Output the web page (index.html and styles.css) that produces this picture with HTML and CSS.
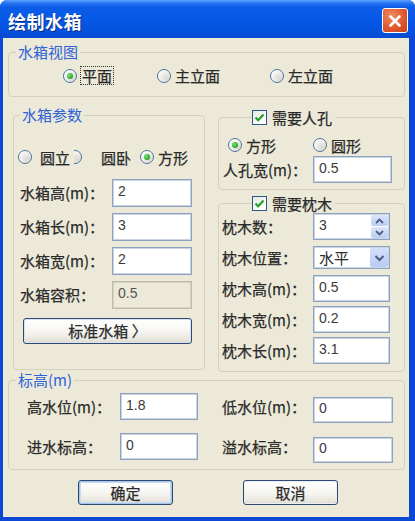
FILE: index.html
```html
<!DOCTYPE html>
<html lang="zh-CN">
<head>
<meta charset="utf-8">
<title>绘制水箱</title>
<link rel="stylesheet" href="styles.css">
</head>
<body>
<div class="window">
  <div class="titlebar">
    <span class="title">绘制水箱</span>
    <span class="close"><svg width="16" height="16" viewBox="0 0 16 16"><path d="M3.5 3.5 L12.5 12.5 M12.5 3.5 L3.5 12.5" stroke="#fff" stroke-width="2.6" stroke-linecap="round"/></svg></span>
  </div>
  <div class="client">
    <fieldset class="group g-view">
      <legend class="blue-legend">水箱视图</legend>
      <div class="view-row">
        <span class="opt"><span class="radio checked"></span><span class="focus">平面</span></span>
        <span class="opt"><span class="radio"></span><span>主立面</span></span>
        <span class="opt"><span class="radio"></span><span>左立面</span></span>
      </div>
    </fieldset>

    <div class="mid">
      <fieldset class="group g-params">
        <legend class="blue-legend">水箱参数</legend>
        <div class="shape-row">
          <span class="opt o1"><span class="radio"></span><span class="t1">圆立</span></span>
          <span class="opt o2"><span class="half"><span class="radio"></span></span><span class="t2">圆卧</span></span>
          <span class="opt o3"><span class="radio checked"></span><span>方形</span></span>
        </div>
        <div class="rows params-rows">
          <div class="field"><span class="lbl w92">水箱高(m)：</span><span class="input w80">2</span></div>
          <div class="field"><span class="lbl w92">水箱长(m)：</span><span class="input w80">3</span></div>
          <div class="field"><span class="lbl w92">水箱宽(m)：</span><span class="input w80">2</span></div>
          <div class="field"><span class="lbl w92">水箱容积：</span><span class="input w80 disabled">0.5</span></div>
        </div>
        <button class="btn btn-std">标准水箱 〉</button>
      </fieldset>

      <div class="rcol">
        <fieldset class="group g-hole">
          <legend class="chk-legend"><span class="checkbox"><svg width="13" height="13" viewBox="0 0 13 13"><path d="M2.5 6.5 L5.2 9.2 L10.5 3.5" fill="none" stroke="#21A121" stroke-width="2.2"/></svg></span>需要人孔</legend>
          <div class="hole-radios">
            <span class="opt h1"><span class="radio checked"></span><span>方形</span></span>
            <span class="opt"><span class="radio"></span><span>圆形</span></span>
          </div>
          <div class="field hole-field"><span class="lbl w90">人孔宽(m)：</span><span class="input w79">0.5</span></div>
        </fieldset>

        <fieldset class="group g-sleeper">
          <legend class="chk-legend"><span class="checkbox"><svg width="13" height="13" viewBox="0 0 13 13"><path d="M2.5 6.5 L5.2 9.2 L10.5 3.5" fill="none" stroke="#21A121" stroke-width="2.2"/></svg></span>需要枕木</legend>
          <div class="rows sleeper-rows">
            <div class="field"><span class="lbl w91">枕木数：</span>
              <span class="input w77 spin"><span class="val">3</span>
                <span class="spinbtns">
                  <span class="sb"><svg width="9" height="6" viewBox="0 0 9 6"><path d="M1 5 L4.5 1.5 L8 5" fill="none" stroke="#4A5E86" stroke-width="1.8"/></svg></span>
                  <span class="sb"><svg width="9" height="6" viewBox="0 0 9 6"><path d="M1 1 L4.5 4.5 L8 1" fill="none" stroke="#4A5E86" stroke-width="1.8"/></svg></span>
                </span>
              </span>
            </div>
            <div class="field"><span class="lbl w91">枕木位置：</span>
              <span class="select w77"><span class="val sel-val">水平</span>
                <span class="arrow"><svg width="11" height="8" viewBox="0 0 11 8"><path d="M1.5 2 L5.5 6 L9.5 2" fill="none" stroke="#4A5E86" stroke-width="2"/></svg></span>
              </span>
            </div>
            <div class="field"><span class="lbl w91">枕木高(m)：</span><span class="input w77">0.5</span></div>
            <div class="field"><span class="lbl w91">枕木宽(m)：</span><span class="input w77">0.2</span></div>
            <div class="field"><span class="lbl w91">枕木长(m)：</span><span class="input w77">3.1</span></div>
          </div>
        </fieldset>
      </div>
    </div>

    <fieldset class="group g-elev">
      <legend class="blue-legend">标高(m)</legend>
      <div class="elev-grid">
        <div class="field half-l"><span class="lbl w93">高水位(m)：</span><span class="input w78">1.8</span></div>
        <div class="field half-r"><span class="lbl w91">低水位(m)：</span><span class="input w80 shift">0</span></div>
        <div class="field half-l"><span class="lbl w93">进水标高：</span><span class="input w78">0</span></div>
        <div class="field half-r"><span class="lbl w91">溢水标高：</span><span class="input w80 shift">0</span></div>
      </div>
    </fieldset>

    <div class="buttons">
      <button class="btn btn-main default">确定</button>
      <button class="btn btn-main">取消</button>
    </div>
  </div>
</div>
</body>
</html>
```

FILE: styles.css
```css
* { box-sizing: border-box; }

body {
  margin: 0;
  font-family: "Noto Sans CJK SC", "Noto Sans", sans-serif;
  font-size: 15px;
  color: #2A2A2A;
  background: #ffffff;
}

.window {
  width: 415px;
  height: 521px;
  display: flex;
  flex-direction: column;
  background: #0C47D6;
  border-radius: 7px 7px 0 0;
  overflow: hidden;
}

.titlebar {
  height: 38px;
  flex: none;
  display: flex;
  align-items: center;
  justify-content: space-between;
  padding: 0 7px 0 8px;
  background: linear-gradient(to bottom, #5DA4FF 0px, #2A76F2 3px, #0C5CE8 7px, #0659E6 18px, #0453DF 30px, #0A4BD2 38px);
}

.title {
  color: #ffffff;
  font-weight: 700;
  font-size: 18px;
  line-height: 20px;
  letter-spacing: 0.5px;
  text-shadow: 1px 1px 0 #0B2C86;
  margin-top: 3px;
}

.close {
  width: 26px;
  height: 25px;
  margin-top: 3px;
  border: 1px solid #ffffff;
  border-radius: 3px;
  background: radial-gradient(circle at 35% 30%, #F08A63 0%, #E0592F 55%, #C43E18 100%);
  display: flex;
  align-items: center;
  justify-content: center;
}

.client {
  flex: 1;
  margin: 0 6px 4px 3px;
  background: #ECE9D8;
  padding: 7px 4px 0 5px;
  display: flex;
  flex-direction: column;
}

/* group boxes */
.group {
  margin: 0;
  min-width: 0;
  padding: 0;
  border: 1px solid #D3D0BF;
  border-radius: 4px;
}

.blue-legend {
  padding: 0 2px;
  font-size: 15px;
  line-height: 14px;
  height: 14px;
  color: #2E63D8;
}

.chk-legend {
  display: flex;
  align-items: center;
  gap: 5px;
  height: 15px;
  line-height: 15px;
  padding: 0 3px 0 0;
  margin-left: 33px;
  color: #2A2A2A;
  -webkit-text-stroke: 0.25px #2A2A2A;
}

.checkbox {
  width: 15px;
  height: 15px;
  border: 1px solid #2A5A8A;
  background: linear-gradient(135deg, #E6E6E0 0%, #FFFFFF 80%);
  display: flex;
  align-items: center;
  justify-content: center;
}

/* radio */
.opt {
  display: flex;
  align-items: center;
  gap: 4px;
  white-space: nowrap;
  -webkit-text-stroke: 0.25px #2A2A2A;
}

.radio {
  width: 14px;
  height: 14px;
  flex: none;
  border-radius: 50%;
  border: 1px solid #4A7298;
  background: radial-gradient(circle at 70% 70%, #D8D8D0 0%, #EDEDE8 45%, #FFFFFF 80%);
  display: flex;
  align-items: center;
  justify-content: center;
}

.radio.checked::after {
  content: "";
  width: 6px;
  height: 6px;
  border-radius: 50%;
  background: radial-gradient(circle at 35% 35%, #7EE07E 0%, #2EAF2E 60%, #178A17 100%);
}

.focus {
  outline: 1px dotted #333;
  outline-offset: 0;
  padding: 0 1px;
  line-height: 17px;
}

/* view group */
.g-view {
  padding: 6px 0 11px;
}
.g-view .blue-legend { margin-left: 7px; }

.view-row {
  height: 20px;
  display: grid;
  grid-template-columns: 94px 113px auto;
  align-items: center;
  padding-left: 54px;
}

/* middle area */
.mid {
  margin-top: 11px;
  display: flex;
  align-items: flex-start;
}

.g-params {
  width: 192px;
  margin-left: 5px;
  padding: 25px 0 25px 6px;
}
.g-params .blue-legend { margin-left: 0; }

.shape-row {
  height: 20px;
  display: flex;
  align-items: center;
  margin-left: -2px;
}
.o1 { width: 54px; gap: 8px; }
.o2 { width: 68px; gap: 19px; }
.half {
  width: 8px;
  height: 14px;
  overflow: hidden;
  display: flex;
  justify-content: flex-end;
  margin-left: 2px;
}
.half .radio { margin-left: -6px; }

.rows {
  display: flex;
  flex-direction: column;
}
.params-rows {
  margin-top: 12px;
  gap: 6px;
}
.params-rows .field { height: 28px; }

.field {
  display: flex;
  align-items: center;
  height: 27px;
}

.lbl {
  flex: none;
  white-space: nowrap;
  line-height: 18px;
  -webkit-text-stroke: 0.25px #2A2A2A;
}
.w90 { width: 90px; }
.w91 { width: 91px; }
.w92 { width: 92px; }
.w93 { width: 93px; }

.input, .select {
  height: 100%;
  flex: none;
  background: #ffffff;
  border: 1px solid #8CA2BF;
  box-shadow: inset 0 0 0 1px #CBD5E2;
  font-family: "Liberation Sans", "DejaVu Sans", sans-serif;
  font-size: 14px;
  color: #3A3A3A;
  padding: 0 0 4px 5px;
  display: flex;
  align-items: center;
}
.w77 { width: 77px; }
.w78 { width: 78px; }
.w79 { width: 79px; }
.w80 { width: 80px; }

.input.disabled {
  background: #ECE9D8;
  border-color: #BDBBAE;
  box-shadow: inset 0 0 0 1px #D6D3C4;
  color: #555;
}

.btn {
  font-family: "Noto Sans CJK SC", "Noto Sans", sans-serif;
  font-size: 15px;
  color: #2A2A2A;
  -webkit-text-stroke: 0.25px #2A2A2A;
  border: 1px solid #2C4A72;
  border-radius: 3px;
  background: linear-gradient(to bottom, #FFFFFF 0%, #F7F6F2 50%, #E6E4DA 90%, #D6D3C6 100%);
  padding: 0;
  line-height: 18px;
}

.btn-std {
  display: block;
  margin: 9px 0 0 3px;
  width: 169px;
  height: 26px;
  box-shadow: inset 0 0 0 1px #D9E2EE;
}

/* right column */
.rcol {
  width: 187px;
  margin-left: 13px;
  padding-top: 2px;
  display: flex;
  flex-direction: column;
}

.g-hole {
  padding: 10px 0 6px;
}
.hole-radios {
  height: 20px;
  display: flex;
  align-items: center;
  padding-left: 9px;
}
.h1 { width: 85px; }
.hole-field {
  margin-top: 1px;
  padding-left: 4px;
}

.g-sleeper {
  margin-top: 6px;
  padding: 2px 0 7px;
}
.sleeper-rows {
  gap: 4px;
  padding-left: 3px;
}

.spin {
  padding: 1px 1px 1px 5px;
  align-items: stretch;
}
.spin .val {
  flex: 1;
  display: flex;
  align-items: center;
  padding-bottom: 4px;
}
.spinbtns {
  width: 17px;
  display: flex;
  flex-direction: column;
  gap: 1px;
}
.sb {
  flex: 1;
  background: linear-gradient(to bottom, #DCE6FB, #BCCDF3);
  border-radius: 2px;
  display: flex;
  align-items: center;
  justify-content: center;
}

.select {
  height: 23px;
  padding: 1px 1px 1px 5px;
  align-items: stretch;
}
.sel-val {
  flex: 1;
  display: flex;
  align-items: center;
  font-family: "Noto Sans CJK SC", sans-serif;
  font-size: 15px;
  color: #2A2A2A;
}
.arrow {
  width: 18px;
  background: linear-gradient(to bottom, #D4E0FB, #B7CAF5);
  border-radius: 2px;
  display: flex;
  align-items: center;
  justify-content: center;
}

/* elevation group */
.g-elev {
  margin-top: 1px;
  padding: 6px 0 9px 18px;
}
.g-elev .blue-legend { margin-left: -11px; }

.elev-grid {
  display: grid;
  grid-template-columns: 171px 171px;
  column-gap: 24px;
  row-gap: 13px;
}
.shift {
  margin-top: 6px;
  height: 26px;
}

/* buttons */
.buttons {
  margin-top: 10px;
  padding-left: 70px;
  display: flex;
  gap: 70px;
}
.btn-main {
  width: 95px;
  height: 25px;
  box-shadow: inset 0 0 0 1px #E8EEF6;
}
.btn-main.default {
  box-shadow: inset 0 0 0 1px #A9C4EC, inset 0 0 0 2px #C9DAF3;
}
```
